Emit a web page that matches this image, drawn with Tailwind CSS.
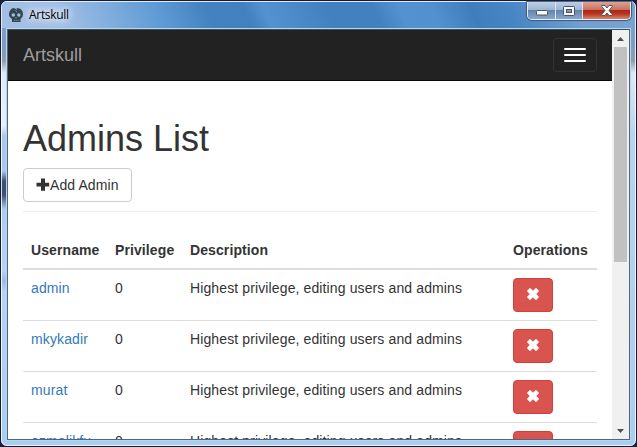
<!DOCTYPE html>
<html lang="en">
<head>
<meta charset="utf-8">
<title>Artskull</title>
<script src="https://cdn.jsdelivr.net/npm/@tailwindcss/browser@4"></script>
</head>
<body class="h-[447px] w-[637px] overflow-hidden bg-[#16233a] font-['Liberation_Sans',Arial,sans-serif] text-sm leading-5 text-[#333]">
<svg class="hidden">
  <symbol id="remove" viewBox="0 0 12 12"><path d="M3 0 6 2.700 9 0 12 3 9.200 6 12 9 9 12 6 9.300 3 12 0 9 2.800 6 0 3Z" fill="#fff" stroke="#fff" stroke-width=".3"/></symbol>
</svg>
<div class="flex h-[447px] w-[637px] flex-col rounded-[7px] border border-[#101c38] bg-[linear-gradient(180deg,#7fa8d8_0,#7f9cc4_40px,#8f9db3_60px,#dfe9f7_72px,#e6effb_125px,#a9c8ec_135px,#a9c8ec_170px,#3d5272_180px,#3d5272_194px,#abcdf2_208px,#b5d3f5_270px,#9dbbe0_280px,#b5d3f5_290px,#a9cdf2_447px),linear-gradient(180deg,#7fa8d8_0,#7f9cc4_40px,#8f9db3_60px,#dfe9f7_72px,#b9d3f2_135px,#a9cdf2_447px)] bg-[length:50%_100%,100%_100%] bg-no-repeat">
  <div class="flex min-h-0 flex-1 flex-col rounded-[6px] border border-white/80">
    <header class="relative flex h-[26px] shrink-0 justify-between rounded-t-[5px] bg-[linear-gradient(65deg,#a5bfe3_0%,#a0bfe6_10%,#609bd5_25%,#4481c0_33%,#4380c0_39%,#5391d1_42%,#4380c0_52%,#4380c0_59%,#5391d1_63%,#5290d0_68%,#407dbc_74%,#4885c5_80%,#6f9fd4_90%,#7ca3d0_100%)]">
      <div class="flex items-center gap-1.5 pl-[7px]">
        <svg class="h-[14px] w-[14px]" viewBox="0 0 14 14"><path fill="#344650" fill-rule="evenodd" d="M4.500 0 7 1 8.500 0C12 .4 14 3 14 6.300c0 2.200-1 3.600-2.500 4.700V14H3v-3C1.200 10 0 8.500 0 6.300 0 3 1.900.7 4.500 0ZM4.300 5.300A1.700 1.700 0 1 0 4.300 8.700 1.700 1.700 0 1 0 4.300 5.300ZM9.800 5.300A1.700 1.700 0 1 0 9.800 8.700 1.700 1.700 0 1 0 9.800 5.300ZM7 9 6.300 10.300h1.400ZM5 12.200v.8h.8v-.8Zm1.800 0v.8h.8v-.8Zm1.800 0v.8h.8v-.8Z"/><path d="M8 .8 6.600 2.700 8 4" fill="none" stroke="#8eaccc" stroke-width=".7"/></svg>
        <span class="font-['Open_Sans','Noto_Sans',sans-serif] text-[12px] tracking-[-.3px] text-black [text-shadow:0_0_6px_#fff,0_0_10px_#fff,0_0_14px_#fff]">Artskull</span>
      </div>
      <div class="mr-[4px] flex h-[18px] w-[104px] overflow-hidden rounded-b-[5px] border border-t-0 border-[#e3edf9] shadow-[0_0_1px_1px_#44566f]">
        <div class="flex w-[28px] items-center justify-center border-r border-[#dce6f2] bg-[linear-gradient(#bdcee4_0,#9bb4d2_48%,#6584ab_50%,#86a8d0_100%)]"><svg class="mt-[4px] h-[6px] w-3" viewBox="0 0 12 6"><rect x=".5" y=".5" width="11" height="4.500" rx=".8" fill="#fff" stroke="#4b5468"/></svg></div>
        <div class="flex w-[27px] items-center justify-center border-r border-[#dce6f2] bg-[linear-gradient(#bdcee4_0,#9bb4d2_48%,#6584ab_50%,#86a8d0_100%)]"><svg class="h-[10px] w-3" viewBox="0 0 12 10"><rect x=".5" y=".5" width="11" height="9" rx=".8" fill="#f7f7f7" stroke="#4b5468"/><rect x="3.500" y="3.500" width="5" height="3" fill="#7899c0" stroke="#4b5468"/></svg></div>
        <div class="flex flex-1 items-center justify-center bg-[linear-gradient(#dda394_0,#cc705d_46%,#ac2917_50%,#b93421_70%,#d58a6b_100%)]"><svg class="h-[11px] w-3" viewBox="0 0 12 11"><path d="M.8.500H4L6 3 8 .5h3.200v1L8 5.500l3.200 4v1H8L6 8l-2 2.500H.8v-1L4 5.500l-3.200-4Z" fill="#f8f8f8" stroke="#4b4f60" stroke-width=".9"/></svg></div>
      </div>
    </header>
    <div class="mx-[4px] mb-[4px] flex min-h-0 flex-1 border border-[#b5d8e9]">
      <div class="flex min-h-0 flex-1 border border-t-[#3b5265] border-r-[#52657c] border-b-[#52657c] border-l-[#52657c] bg-white">
        <main class="h-full w-[604px] overflow-hidden">
          <nav class="flex h-[51px] items-center justify-between border-b border-[#080808] bg-[#222] pr-[15px] pl-[15px]">
            <span class="text-lg leading-5 text-[#9d9d9d]">Artskull</span>
            <button class="flex h-[34px] w-11 flex-col items-center justify-center gap-1 rounded-[4px] border border-[#333]">
              <span class="h-0.5 w-[22px] rounded-[1px] bg-white"></span><span class="h-0.5 w-[22px] rounded-[1px] bg-white"></span><span class="h-0.5 w-[22px] rounded-[1px] bg-white"></span>
            </button>
          </nav>
          <div class="px-[15px] pt-[38px]">
            <h1 class="text-[36px] leading-[39px] font-normal">Admins List</h1>
            <button class="mt-[10px] flex h-[34px] w-[109px] items-center rounded-[4px] border border-[#ccc] pl-3">
              <svg class="h-[14px] w-[14px]" viewBox="0 0 14 14"><path d="M5 .5h4v4.300h4.200v3.700H9v4.300H5V8.500H.5V4.800H5Z" fill="#333"/></svg><span class="tracking-[.1px]">Add Admin</span>
            </button>
            <hr class="mt-[9px] mb-5 border-t border-[#eee]">
            <div class="grid h-[38px] grid-cols-[84px_75px_323px_92px] border-b-2 border-[#ddd] font-bold tracking-[.1px] *:px-2 *:pt-2">
              <div>Username</div><div>Privilege</div><div>Description</div><div>Operations</div>
            </div>
            <div class="grid h-[51px] grid-cols-[84px_75px_323px_92px] border-b border-[#ddd] tracking-[.12px] *:px-2 *:pt-2">
              <div class="text-[#337ab7]">admin</div><div>0</div><div>Highest privilege, editing users and admins</div><div><button class="flex h-[34px] w-10 items-center justify-center rounded-[4px] border border-[#d43f3a] bg-[#d9534f]"><svg class="mb-[2px] size-3"><use href="#remove"/></svg></button></div>
            </div>
            <div class="grid h-[51px] grid-cols-[84px_75px_323px_92px] border-b border-[#ddd] tracking-[.12px] *:px-2 *:pt-2">
              <div class="text-[#337ab7]">mkykadir</div><div>0</div><div>Highest privilege, editing users and admins</div><div><button class="flex h-[34px] w-10 items-center justify-center rounded-[4px] border border-[#d43f3a] bg-[#d9534f]"><svg class="mb-[2px] size-3"><use href="#remove"/></svg></button></div>
            </div>
            <div class="grid h-[51px] grid-cols-[84px_75px_323px_92px] border-b border-[#ddd] tracking-[.12px] *:px-2 *:pt-2">
              <div class="text-[#337ab7]">murat</div><div>0</div><div>Highest privilege, editing users and admins</div><div><button class="flex h-[34px] w-10 items-center justify-center rounded-[4px] border border-[#d43f3a] bg-[#d9534f]"><svg class="mb-[2px] size-3"><use href="#remove"/></svg></button></div>
            </div>
            <div class="grid h-[51px] grid-cols-[84px_75px_323px_92px] border-b border-[#ddd] tracking-[.12px] *:px-2 *:pt-2">
              <div class="text-[#337ab7]">ozmelikfu</div><div>0</div><div>Highest privilege, editing users and admins</div><div><button class="flex h-[34px] w-10 items-center justify-center rounded-[4px] border border-[#d43f3a] bg-[#d9534f]"><svg class="mb-[2px] size-3"><use href="#remove"/></svg></button></div>
            </div>
          </div>
        </main>
        <aside class="flex flex-1 flex-col items-center bg-[#f0f0f0]">
          <div class="flex h-[17px] items-center"><svg class="h-1 w-[7px]" viewBox="0 0 7 4"><path d="M3.500 0 7 4H0Z" fill="#505050"/></svg></div>
          <div class="h-[215px] w-[13px] bg-[#c1c1c1]"></div>
          <div class="mt-auto flex h-[17px] items-center"><svg class="h-1 w-[7px]" viewBox="0 0 7 4"><path d="M0 0h7L3.500 4Z" fill="#505050"/></svg></div>
        </aside>
      </div>
    </div>
  </div>
</div>
</body>
</html>
